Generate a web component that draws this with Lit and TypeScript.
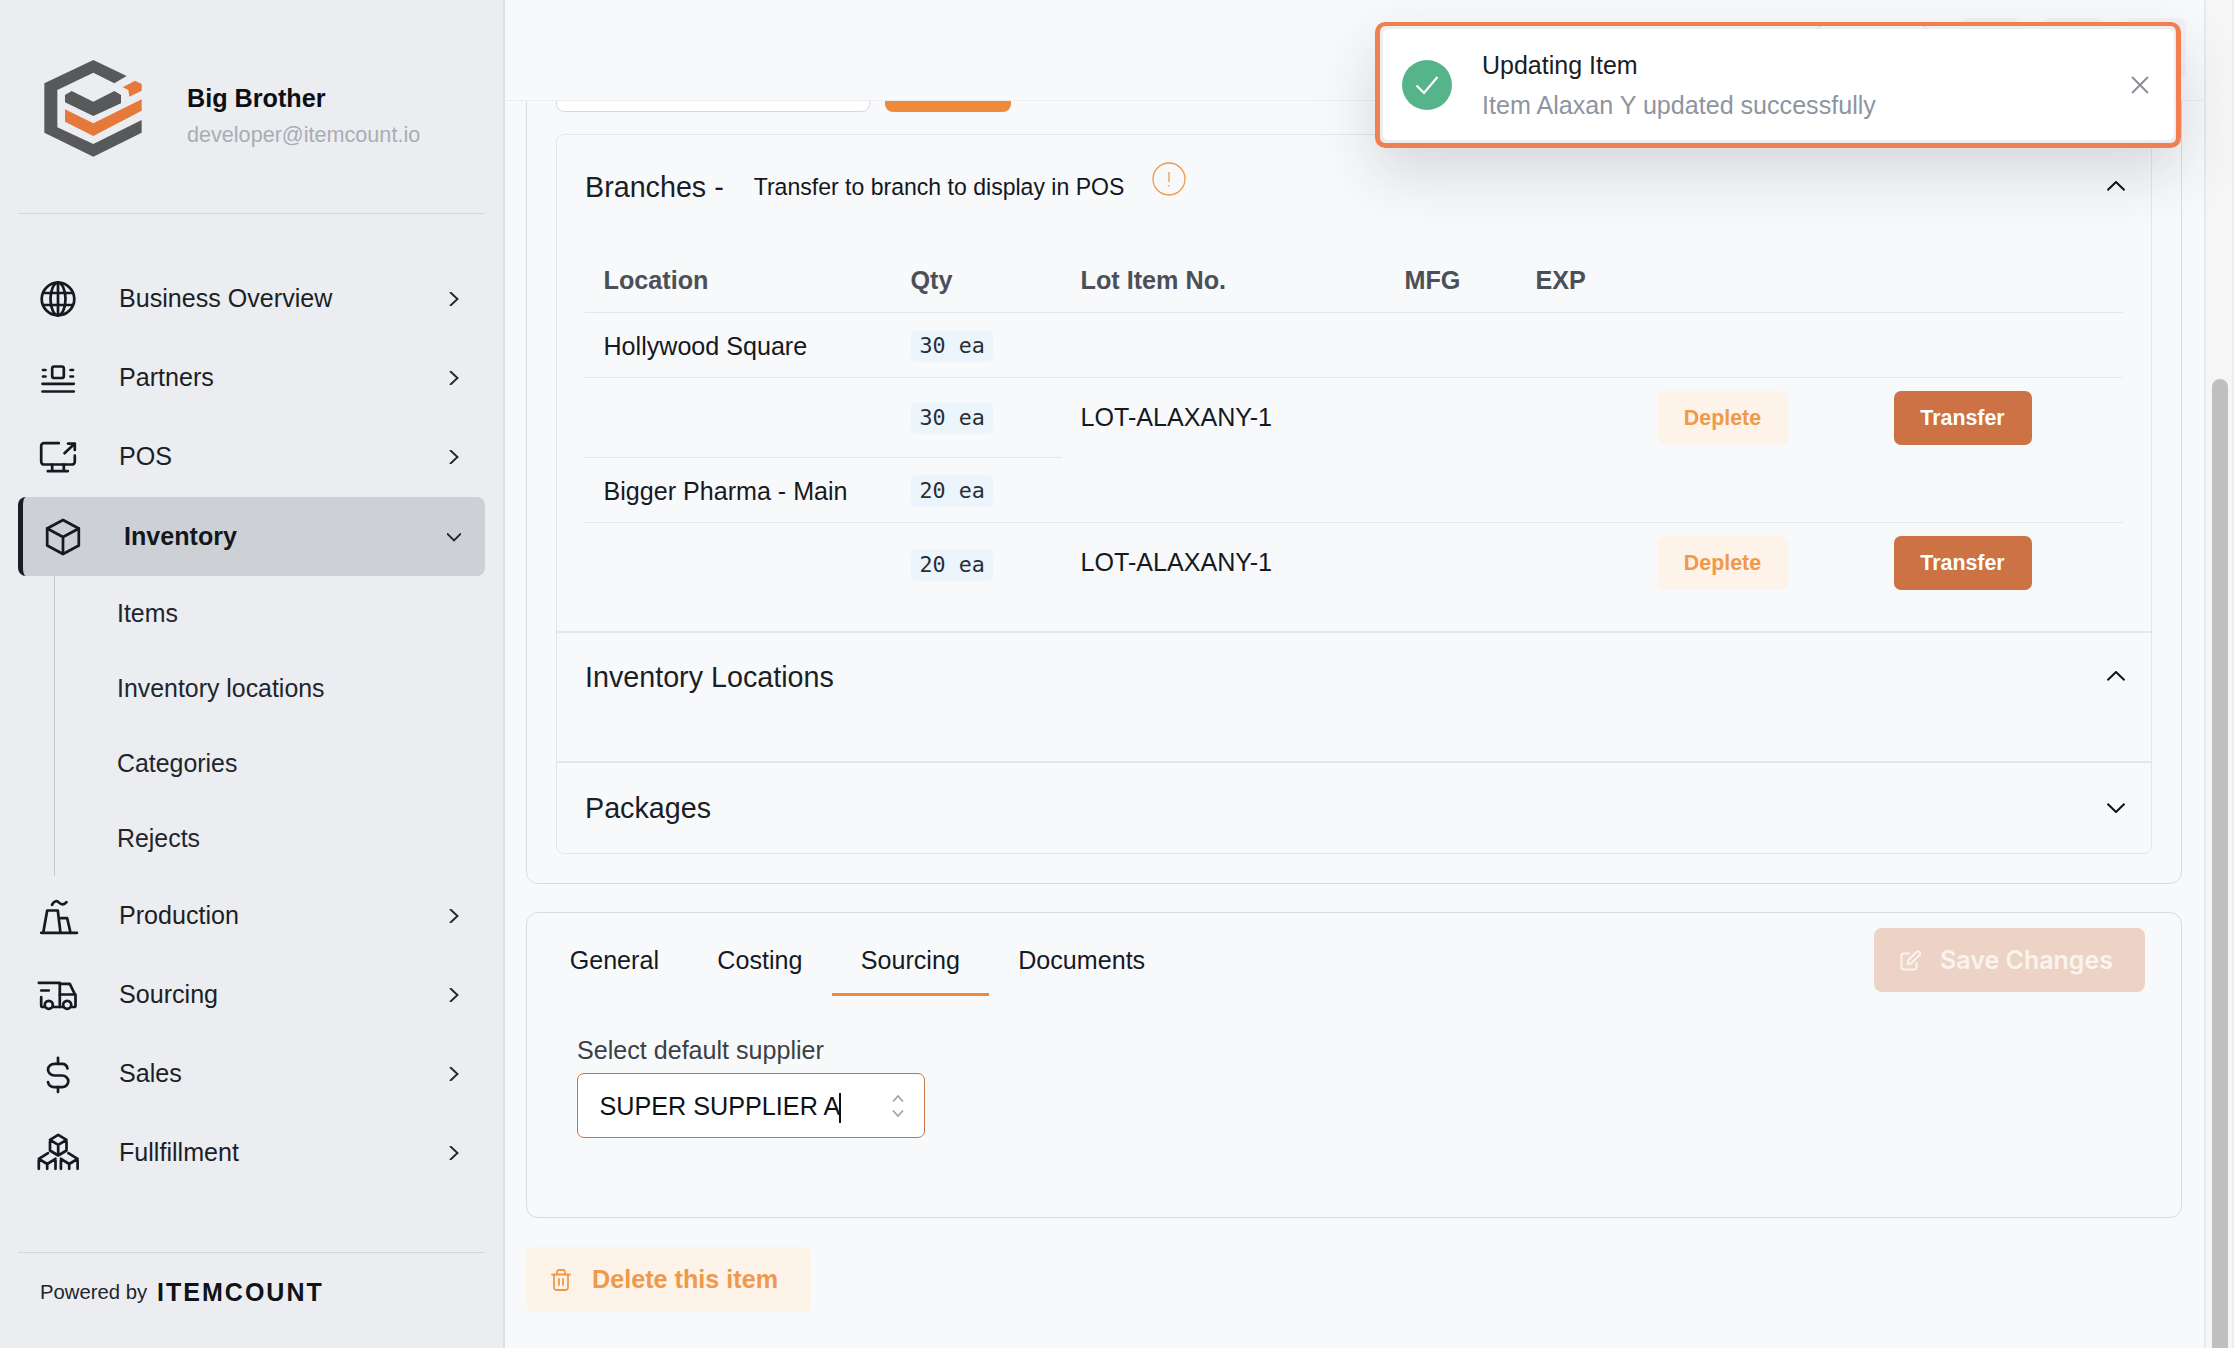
import { html, css, LitElement } from "lit";
import { customElement } from "lit/decorators.js";

// icons are drawn on a 40x40 box, stroke comes from .ico
const icons = {
  globe: html`<svg class="ico" viewBox="0 0 40 40">
    <circle cx="20" cy="20" r="16.3" />
    <ellipse cx="20" cy="20" rx="7.5" ry="16.3" />
    <path d="M20 3.7V36.3M5.4 14H34.6M5.4 26H34.6" />
  </svg>`,
  partners: html`<svg class="ico" viewBox="0 0 40 40">
    <rect x="14.2" y="8.5" width="11.6" height="11.5" rx="2" />
    <path d="M5 12H7.5M5 18.5H7.5M32.5 12H35M32.5 18.5H35M4.5 25.8H35.8M4.5 33.5H35.8" />
  </svg>`,
  pos: html`<svg class="ico" viewBox="0 0 40 40">
    <path d="M20.8 6.2H6A2.8 2.8 0 0 0 3.2 9V24.7A2.8 2.8 0 0 0 6 27.5H34A2.8 2.8 0 0 0 36.8 24.7V18.5" />
    <path d="M26.5 16.2L36.8 6.6M30 6.6H36.8V13M14.2 27.5V34.2M25.8 27.5V34.2M9.8 34.2H29.8" />
  </svg>`,
  cube: html`<svg class="ico" viewBox="0 0 40 40">
    <path d="M20 3L35.8 11.5V28.5L20 37L4.2 28.5V11.5Z" />
    <path d="M4.2 11.5L20 20L35.8 11.5M20 20V37" />
  </svg>`,
  production: html`<svg class="ico" viewBox="0 0 40 40">
    <path d="M14 8.8C16.5 4.5 19 4.5 21 6.6C23.5 9 26 9 28.5 6.2" />
    <path d="M3.2 36.8H39M5.2 36.8L9.2 14.5H19.8L22.5 36.8M23.2 22.2H29.2L32.5 36.8" />
  </svg>`,
  truck: html`<svg class="ico" viewBox="0 0 40 40">
    <path d="M0.8 7.8H21.8V32H14.8M3.2 15.5H10.8M3.2 22.2V30.5Q3.2 32 5 32H6.8" />
    <path d="M21.8 8.8H31.8L37.5 20.5V30.5Q37.5 32 36 32H33.2M21.8 19.5H37.5M21.8 32H25.2" />
    <circle cx="10.8" cy="29.8" r="4" />
    <circle cx="29.2" cy="29.8" r="4" />
  </svg>`,
  dollar: html`<svg class="ico" viewBox="0 0 40 40">
    <path d="M29.5 14.5C29 11.5 26.5 9.8 24 9.8H16.5C13 9.8 10 12.5 10 15.5C10 18.5 12.5 21.5 16.5 21.5H24C27.5 21.5 30.3 24 30.3 27.3C30.3 30.5 27.5 33.2 24 33.2H16C13 33.2 10.5 31 10 28" />
    <path d="M20 3.8V9.8M20 33.2V38" />
  </svg>`,
  boxes: html`<svg class="ico" viewBox="0 0 40 40">
    <path d="M20.2 1.8L28.5 6.8V17.5L20.2 22.5L12 17.5V6.8ZM12 6.8L20.2 11.8L28.5 6.8M20.2 11.8V22.5" />
    <path d="M0.8 35.8V25.8L10 20.2M0.8 25.8L9.2 31L17.5 25.8M9.2 31V35.8M17.5 25.8V35.8" />
    <path d="M39.6 35.8V25.8L30.4 20.2M39.6 25.8L31.2 31L22.9 25.8M31.2 31V35.8M22.9 25.8V35.8" />
  </svg>`,
};

const chevRight = html`<svg class="chev" viewBox="0 0 14 14"><path d="M3 0L10.5 7L3 14" /></svg>`;
const chevDown = html`<svg class="chev" viewBox="0 0 14 14"><path d="M0 3.5L7 10.5L14 3.5" /></svg>`;
const accUp = html`<svg class="acc-chev up" viewBox="0 0 18 10"><path d="M0.5 9.2L9 1L17.5 9.2" /></svg>`;
const accDown = html`<svg class="acc-chev" viewBox="0 0 18 10"><path d="M0.5 0.8L9 9L17.5 0.8" /></svg>`;

const navTop = [
  { label: "Business Overview", icon: icons.globe },
  { label: "Partners", icon: icons.partners },
  { label: "POS", icon: icons.pos },
];
const navBottom = [
  { label: "Production", icon: icons.production },
  { label: "Sourcing", icon: icons.truck },
  { label: "Sales", icon: icons.dollar },
  { label: "Fullfillment", icon: icons.boxes },
];
const subItems = ["Items", "Inventory locations", "Categories", "Rejects"];
const tabs = ["General", "Costing", "Sourcing", "Documents"];

@customElement("app-root")
class AppRoot extends LitElement {
  static styles = css`
    :host {
      display: block;
      position: relative;
      width: 2234px;
      height: 1348px;
      overflow: hidden;
      font-family: "Liberation Sans", Arial, sans-serif;
      font-size: 25px;
      color: #16191f;
      background: #f8f9fb;
    }
    .page {
      display: grid;
      grid-template-columns: 504px 1700px 30px;
      height: 1348px;
    }

    .sidebar {
      display: flex;
      flex-direction: column;
      background: #ebedf1;
      border-right: 2px solid #dcdee2;
      box-sizing: border-box;
      width: 505px;
      height: 1348px;
    }
    .brand {
      display: flex;
      gap: 17px;
      height: 213px;
      padding: 40px 0 0 20px;
      box-sizing: border-box;
    }
    .logo {
      width: 150px;
      height: 130px;
      flex: none;
    }
    .who {
      margin-top: 43px;
      display: flex;
      flex-direction: column;
      gap: 7px;
    }
    .who b {
      line-height: 30px;
      font-size: 25.2px;
      color: #0d0f13;
    }
    .who span {
      line-height: 30px;
      font-size: 21.6px;
      color: #a9adb3;
    }
    .rule {
      height: 1px;
      margin: 0 18px;
      background: #d5d7db;
      flex: none;
    }
    .nav {
      margin: 45px 18px 0;
      flex: 1;
    }
    .row {
      display: flex;
      align-items: center;
      height: 79px;
      padding: 0 24px 0 19.5px;
      font-size: 25.1px;
      color: #1c1f25;
      box-sizing: border-box;
    }
    .row .label {
      flex: 1;
      margin-left: 41.5px;
    }
    .row.active {
      margin-top: 1px;
      background: #cdd1d5;
      border-left: 5px solid #1a1d24;
      border-radius: 8px;
      font-weight: 700;
      color: #14171c;
    }
    .ico {
      width: 40px;
      height: 40px;
      flex: none;
      overflow: visible;
      fill: none;
      stroke: #16191f;
      stroke-width: 2.7;
      stroke-linecap: round;
      stroke-linejoin: round;
    }
    .chev {
      width: 14px;
      height: 14px;
      flex: none;
      fill: none;
      stroke: #23262c;
      stroke-width: 1.9;
    }
    .sub {
      margin-left: 36px;
      border-left: 1.5px solid #c6c9ce;
      padding-left: 62px;
      height: 300px;
      box-sizing: border-box;
    }
    .sub div {
      height: 75px;
      line-height: 75px;
      font-size: 24.9px;
      color: #22252b;
    }
    .powered {
      display: flex;
      align-items: center;
      gap: 10px;
      height: 95px;
      padding: 0 0 17px 40px;
      box-sizing: border-box;
      font-size: 20.3px;
      color: #22252b;
    }
    .powered b {
      font-size: 25px;
      letter-spacing: 2px;
      color: #101318;
    }

    .main {
      display: flex;
      flex-direction: column;
      height: 1348px;
      min-width: 0;
    }
    .topbar {
      display: flex;
      justify-content: flex-end;
      align-items: flex-start;
      gap: 22px;
      height: 101px;
      padding: 18px 18px 0 0;
      box-sizing: border-box;
      border-bottom: 1px solid #ebedf0;
      flex: none;
      overflow: hidden;
    }
    .top-outline {
      width: 114px;
      height: 60px;
      margin: 7px 8px 0 0;
      border: 1.5px solid #f07f52;
      border-radius: 8px;
      box-sizing: border-box;
    }
    .top-square {
      width: 61px;
      height: 61px;
      border-radius: 8px;
      background: #f1f2f4;
    }
    .scroller {
      flex: 1;
      overflow: hidden;
      padding: 0 22px;
    }
    .card {
      border: 1px solid #d9dbe0;
      border-radius: 12px;
      width: 1656px;
      box-sizing: border-box;
    }
    .card.first {
      margin-top: -30px;
      padding: 0 29px 29px;
    }
    .peek {
      display: flex;
      align-items: flex-end;
      gap: 15px;
      height: 40px;
    }
    .peek-input {
      width: 314px;
      height: 30px;
      background: #fff;
      border: 1px solid #d6d8dc;
      border-radius: 8px;
      box-sizing: border-box;
    }
    .peek-btn {
      width: 126px;
      height: 30px;
      background: #ee8a3c;
      border-radius: 8px;
    }

    .accordion {
      margin-top: 22px;
      border: 1px solid #e3e5e9;
      border-radius: 8px;
    }
    .section {
      padding: 0 28px;
      border-top: 2px solid #e4e6ea;
    }
    .section:first-child {
      border-top: 0;
    }
    .section.branches {
      padding-bottom: 26px;
    }
    .acc-head {
      display: flex;
      align-items: center;
      height: 90px;
    }
    .acc-head h3 {
      margin: 0;
      font-size: 28.7px;
      font-weight: 400;
      color: #1b1e24;
    }
    .branches .acc-head {
      height: 104px;
    }
    .acc-head .note {
      margin-left: 30px;
      font-size: 23.05px;
      color: #14171c;
    }
    .hint {
      width: 34px;
      height: 34px;
      margin: -16px 0 0 28px;
      fill: none;
      stroke: #f0994a;
      stroke-width: 1.3;
      flex: none;
    }
    .acc-chev {
      width: 18px;
      height: 10px;
      margin-left: auto;
      margin-right: -2px;
      fill: none;
      stroke: #101216;
      stroke-width: 2;
      flex: none;
    }
    .acc-chev.up {
      margin-bottom: 3px;
    }
    .locations {
      height: 128px;
    }
    .locations .acc-head {
      height: 88px;
    }

    table {
      width: 100%;
      table-layout: fixed;
      border-collapse: separate;
      border-spacing: 0;
    }
    th,
    td {
      padding: 0 0 0 18.5px;
      box-sizing: border-box;
      text-align: left;
      font-weight: 400;
      border-bottom: 1px solid #e4e6ea;
    }
    th {
      height: 74px;
      padding-top: 10px;
      font-size: 25.2px;
      font-weight: 700;
      color: #4b5058;
    }
    td {
      height: 65px;
      padding-top: 3px;
      font-size: 25.1px;
      color: #16191f;
    }
    tr.tall td {
      height: 80px;
    }
    tr.last td {
      height: 82px;
      border-bottom: 0;
    }
    td.span {
      vertical-align: top;
      padding-top: 13px;
    }
    td.lot {
      vertical-align: top;
      padding-top: 0;
      line-height: 79px;
    }
    .c1 { width: 307px; }
    .c2 { width: 170px; }
    .c3 { width: 324px; }
    .c4 { width: 131px; }
    .c5 { width: 122px; }
    .c6 { width: 236px; }
    .c7 { width: 248px; }
    .qty {
      display: inline-block;
      height: 32px;
      line-height: 31px;
      padding: 0 8px 0 9px;
      background: #edf5fc;
      border-radius: 6px;
      font-family: "DejaVu Sans Mono", monospace;
      font-size: 21.7px;
      color: #2a2e35;
      vertical-align: middle;
      position: relative;
      top: -1px;
    }
    .btn {
      display: flex;
      align-items: center;
      justify-content: center;
      height: 54px;
      border-radius: 7px;
      font-size: 21.4px;
      font-weight: 700;
    }
    .deplete {
      width: 130px;
      background: #fdf3e8;
      color: #f0994a;
    }
    .transfer {
      width: 138px;
      background: #cc7244;
      color: #fff;
    }

    .card.second {
      margin-top: 28px;
      height: 306px;
    }
    .tabbar {
      display: flex;
      justify-content: space-between;
      padding: 15px 36px 0 13.5px;
    }
    .tabs {
      display: flex;
    }
    .tab {
      height: 68px;
      line-height: 65px;
      padding: 0 29.2px;
      box-sizing: border-box;
      font-size: 25.1px;
      color: #16191f;
    }
    .tab.on {
      border-bottom: 3px solid #ee8a3c;
    }
    .save {
      display: flex;
      align-items: center;
      gap: 19px;
      width: 271px;
      height: 64px;
      padding-left: 26px;
      box-sizing: border-box;
      background: #ecd3c5;
      border-radius: 8px;
      font-family: Inter, "Liberation Sans", sans-serif;
      font-size: 25px;
      font-weight: 600;
      color: #faf3ee;
    }
    .save svg {
      width: 21px;
      height: 21px;
      fill: none;
      stroke: #faf3ee;
      stroke-width: 2;
      stroke-linecap: round;
      stroke-linejoin: round;
      flex: none;
    }
    .field {
      margin: 39px 0 0 50px;
    }
    .field label {
      display: block;
      line-height: 30px;
      font-size: 25.1px;
      color: #3b3f46;
    }
    .select {
      display: flex;
      align-items: center;
      justify-content: space-between;
      width: 348px;
      height: 65px;
      margin-top: 8px;
      padding: 4px 20px 0 21.5px;
      box-sizing: border-box;
      background: #fff;
      border: 1.5px solid #cc7244;
      border-radius: 7px;
      font-size: 25.2px;
      color: #0f1115;
    }
    .caret {
      display: inline-block;
      width: 2px;
      height: 30px;
      margin-left: -1px;
      background: #0f1115;
      vertical-align: middle;
    }
    .updown {
      width: 12px;
      height: 22px;
      margin-top: -4px;
      fill: none;
      stroke: #9aa0a8;
      stroke-width: 1.6;
      flex: none;
    }
    .delete {
      display: flex;
      align-items: center;
      gap: 21px;
      width: 285px;
      height: 65px;
      margin-top: 29px;
      padding-left: 25px;
      box-sizing: border-box;
      background: #fdf3e8;
      border-radius: 8px;
      font-size: 25.2px;
      font-weight: 700;
      color: #f0994a;
    }
    .delete svg {
      width: 20px;
      height: 22px;
      fill: none;
      stroke: #f0994a;
      stroke-width: 1.8;
      stroke-linejoin: round;
      stroke-linecap: round;
      flex: none;
    }

    .scrollbar {
      position: relative;
      background: #f6f6f7;
      border-left: 2px solid #e8e9eb;
      border-right: 2px solid #ededee;
      box-sizing: border-box;
    }
    .thumb {
      position: absolute;
      left: 6px;
      top: 379px;
      bottom: 0;
      width: 16px;
      background: #c0c0c0;
      border-radius: 8px 8px 0 0;
    }

    .toast-ring {
      position: absolute;
      left: 1375px;
      top: 22px;
      width: 806px;
      height: 126px;
      box-sizing: border-box;
      border: 5px solid #f07f52;
      border-top-width: 4px;
      border-radius: 10px;
      padding: 3px 2px 3px 3px;
      background: rgba(232, 233, 236, 0.75);
      box-shadow: 0 25px 60px rgba(40, 45, 55, 0.16);
    }
    .toast {
      display: flex;
      align-items: center;
      height: 100%;
      padding: 0 25px 0 19px;
      box-sizing: border-box;
      background: #fff;
      border-radius: 6px;
    }
    .ok {
      width: 50px;
      height: 50px;
      flex: none;
    }
    .toast-text {
      flex: 1;
      margin-left: 30px;
      display: flex;
      flex-direction: column;
      gap: 10px;
    }
    .toast-text b {
      font-weight: 400;
      line-height: 30px;
      font-size: 25px;
      color: #1a1d23;
    }
    .toast-text span {
      line-height: 30px;
      font-size: 25.1px;
      color: #8d95a0;
    }
    .close {
      width: 18px;
      height: 18px;
      fill: none;
      stroke: #8b9098;
      stroke-width: 2;
      flex: none;
    }
  `;

  renderRow(item) {
    return html`<div class="row">
      ${item.icon}<span class="label">${item.label}</span>${chevRight}
    </div>`;
  }

  renderSidebar() {
    return html`<aside class="sidebar">
      <div class="brand">
        <svg class="logo" viewBox="0 0 450 390">
          <path
            fill="#58595b"
            d="M220 60L320 108L283 130L220 98L112 150V262L220 312L365 240V278L220 350L73 278V130Z"
          />
          <path fill="#58595b" d="M135 165L155 153L220 185L283 153L303 165V190L220 228L135 187Z" />
          <path fill="#e5793b" d="M135 208L220 250L365 178V212L220 288L135 245Z" />
          <path fill="#e5793b" d="M308 142L345 122L365 132V152L328 170L325 150Z" />
        </svg>
        <div class="who">
          <b>Big Brother</b>
          <span>developer@itemcount.io</span>
        </div>
      </div>
      <div class="rule"></div>
      <nav class="nav">
        ${navTop.map((item) => this.renderRow(item))}
        <div class="row active">
          ${icons.cube}<span class="label">Inventory</span>${chevDown}
        </div>
        <div class="sub">${subItems.map((s) => html`<div>${s}</div>`)}</div>
        ${navBottom.map((item) => this.renderRow(item))}
      </nav>
      <div class="rule"></div>
      <div class="powered">Powered by <b>ITEMCOUNT</b></div>
    </aside>`;
  }

  renderBranches() {
    return html`<table>
      <colgroup>
        <col class="c1" /><col class="c2" /><col class="c3" /><col class="c4" /><col class="c5" /><col class="c6" /><col class="c7" />
      </colgroup>
      <thead>
        <tr>
          <th>Location</th>
          <th>Qty</th>
          <th>Lot Item No.</th>
          <th>MFG</th>
          <th>EXP</th>
          <th></th>
          <th></th>
        </tr>
      </thead>
      <tbody>
        <tr>
          <td>Hollywood Square</td>
          <td><span class="qty">30 ea</span></td>
          <td></td><td></td><td></td><td></td><td></td>
        </tr>
        <tr class="tall">
          <td></td>
          <td><span class="qty">30 ea</span></td>
          <td class="lot" rowspan="2">LOT-ALAXANY-1</td>
          <td rowspan="2"></td>
          <td rowspan="2"></td>
          <td class="span" rowspan="2"><div class="btn deplete">Deplete</div></td>
          <td class="span" rowspan="2"><div class="btn transfer">Transfer</div></td>
        </tr>
        <tr>
          <td>Bigger Pharma - Main</td>
          <td><span class="qty">20 ea</span></td>
        </tr>
        <tr class="last">
          <td></td>
          <td><span class="qty">20 ea</span></td>
          <td class="lot">LOT-ALAXANY-1</td>
          <td></td>
          <td></td>
          <td class="span"><div class="btn deplete">Deplete</div></td>
          <td class="span"><div class="btn transfer">Transfer</div></td>
        </tr>
      </tbody>
    </table>`;
  }

  renderMain() {
    return html`<main class="main">
      <div class="topbar">
        <div class="top-outline"></div>
        <div class="top-square"></div>
        <div class="top-square"></div>
        <div class="top-square"></div>
      </div>
      <div class="scroller">
        <section class="card first">
          <div class="peek">
            <div class="peek-input"></div>
            <div class="peek-btn"></div>
          </div>
          <div class="accordion">
            <div class="section branches">
              <div class="acc-head">
                <h3>Branches -</h3>
                <span class="note">Transfer to branch to display in POS</span>
                <svg class="hint" viewBox="0 0 34 34">
                  <circle cx="17" cy="17" r="16" />
                  <path d="M17 10V20M17 23V24.5" />
                </svg>
                ${accUp}
              </div>
              ${this.renderBranches()}
            </div>
            <div class="section locations">
              <div class="acc-head"><h3>Inventory Locations</h3>${accUp}</div>
            </div>
            <div class="section packages">
              <div class="acc-head"><h3>Packages</h3>${accDown}</div>
            </div>
          </div>
        </section>
        <section class="card second">
          <div class="tabbar">
            <div class="tabs">
              ${tabs.map((t) => html`<div class="tab ${t === "Sourcing" ? "on" : ""}">${t}</div>`)}
            </div>
            <div class="save">
              <svg viewBox="0 0 21 21">
                <path d="M9 3.5H4A2.5 2.5 0 0 0 1.5 6V17A2.5 2.5 0 0 0 4 19.5H14A2.5 2.5 0 0 0 16.5 17V13" />
                <path d="M7.5 14L8 10.5L16.5 2A2 2 0 0 1 19.5 5L11 13.5Z" />
              </svg>
              Save Changes
            </div>
          </div>
          <div class="field">
            <label>Select default supplier</label>
            <div class="select">
              <span>SUPER SUPPLIER A<i class="caret"></i></span>
              <svg class="updown" viewBox="0 0 12 22">
                <path d="M1 6.5L6 1L11 6.5M1 15.5L6 21L11 15.5" />
              </svg>
            </div>
          </div>
        </section>
        <div class="delete">
          <svg viewBox="0 0 20 22">
            <path d="M1 5.5H19M3 5.5V18.5A2.5 2.5 0 0 0 5.5 21H14.5A2.5 2.5 0 0 0 17 18.5V5.5" />
            <path d="M6 5.5V3A2 2 0 0 1 8 1H12A2 2 0 0 1 14 3V5.5M8 10V16M12 10V16" />
          </svg>
          Delete this item
        </div>
      </div>
    </main>`;
  }

  render() {
    return html`
      <div class="page">
        ${this.renderSidebar()} ${this.renderMain()}
        <div class="scrollbar"><div class="thumb"></div></div>
      </div>
      <div class="toast-ring">
        <div class="toast">
          <svg class="ok" viewBox="0 0 50 50">
            <circle cx="25" cy="25" r="25" fill="#56b48a" />
            <path d="M14.5 25.5L22 33L35.5 17" fill="none" stroke="#fff" stroke-width="2.2" />
          </svg>
          <div class="toast-text">
            <b>Updating Item</b>
            <span>Item Alaxan Y updated successfully</span>
          </div>
          <svg class="close" viewBox="0 0 18 18"><path d="M1 1L17 17M17 1L1 17" /></svg>
        </div>
      </div>
    `;
  }
}
